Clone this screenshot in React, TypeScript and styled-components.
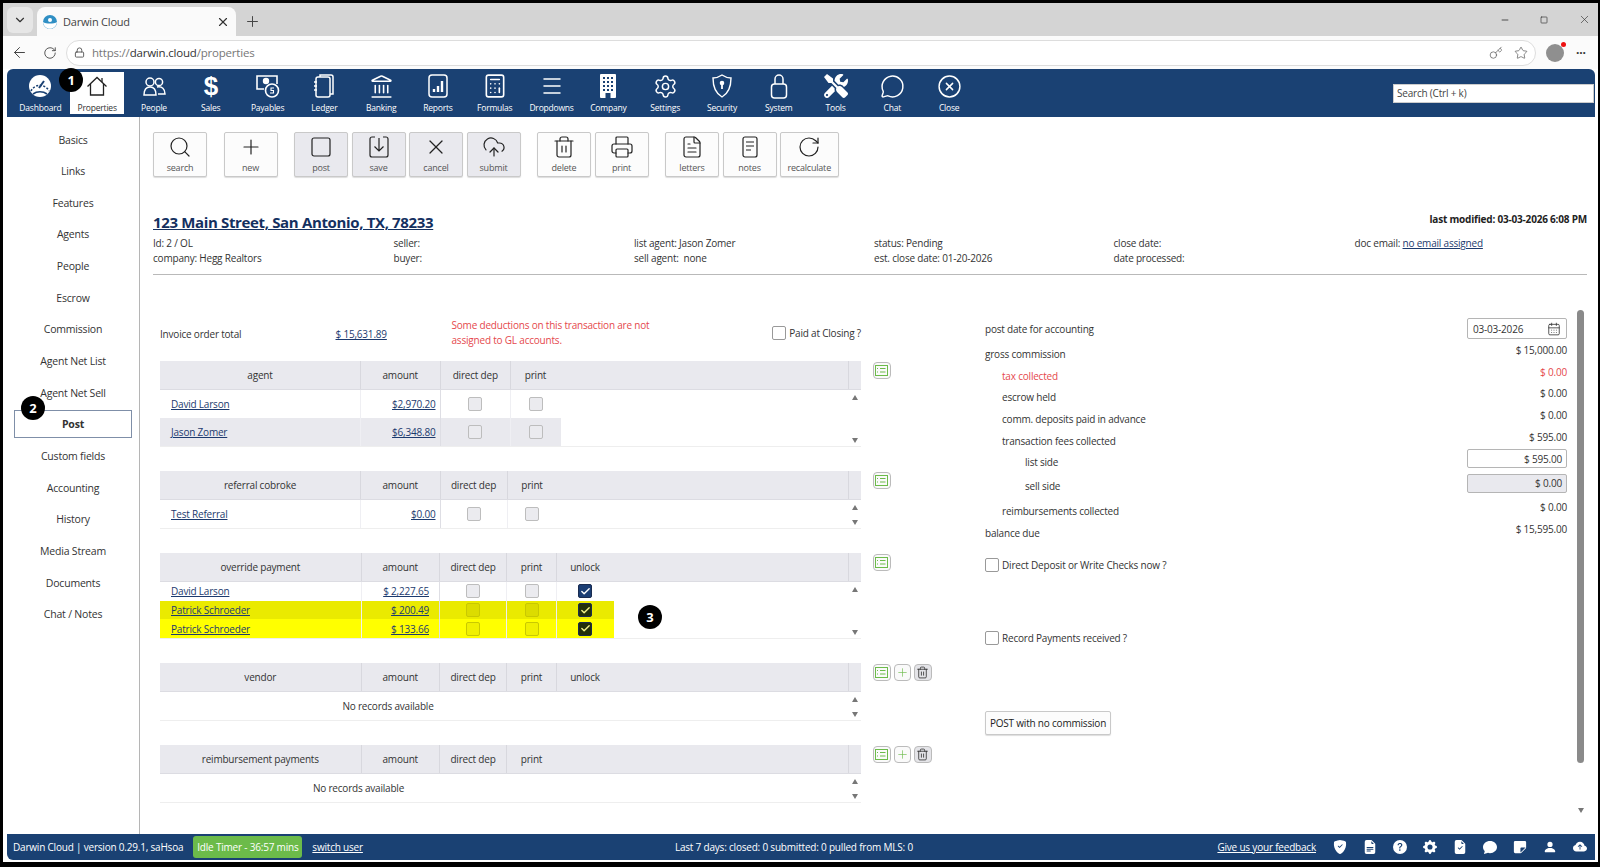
import React from 'react';
import styled, { createGlobalStyle } from 'styled-components';
import {
  ArrowLeft,
  Calculator,
  CalendarDays,
  Check,
  ChevronDown,
  CircleX,
  CloudUpload,
  FileText,
  Key,
  Landmark,
  Lock,
  Menu,
  MessageCircle,
  Minus,
  Plus,
  Printer,
  RotateCw,
  Search,
  Settings,
  Square,
  Star,
  Trash2,
  X,
} from 'lucide-react';
import { FaTools } from 'react-icons/fa';
import {
  BsChatFill,
  BsCloudArrowUpFill,
  BsFileEarmarkCheckFill,
  BsFileEarmarkTextFill,
  BsGearFill,
  BsPersonFill,
  BsQuestionCircleFill,
  BsShieldFillCheck,
  BsStickyFill,
} from 'react-icons/bs';

const NAVY = '#1a4173';
const HEAD = '#e9e9ee';

const GlobalStyle = createGlobalStyle`
  html, body {
    margin: 0;
    background: #000;
    font-family: 'Open Sans', 'Noto Sans', sans-serif;
    font-size: 10px;
    letter-spacing: -0.2px;
    color: #333;
  }
  * { box-sizing: border-box; }
`;

// Small hand drawn icons

const Dashboard = () => (
  <svg width="24" height="24" viewBox="0 0 24 24">
    <circle cx="12" cy="12" r="11" fill="#fff" />
    <path d="M3 17a10 10 0 0 1 18 0" fill="none" stroke={NAVY} strokeWidth="1.6" strokeDasharray="2 1.6" />
    <path d="M11 14l5-7" stroke={NAVY} strokeWidth="2" />
    <path d="M5 20c4-3 10-3 14 0" fill="none" stroke={NAVY} strokeWidth="1.6" />
  </svg>
);

const House = () => (
  <svg width="24" height="24" viewBox="0 0 24 24" fill="none" stroke="#222" strokeWidth="1.3">
    <path d="M2.5 12.5 12 3.5l9.5 9" />
    <path d="M5.5 10v11h13V10" />
    <path d="M17 4v4" />
  </svg>
);

const People = () => (
  <svg width="24" height="24" viewBox="0 0 24 24" fill="none" stroke="#fff" strokeWidth="1.5">
    <circle cx="8" cy="8" r="4" />
    <circle cx="17" cy="8" r="3.6" />
    <path d="M2 21c0-5 2-8 6-8s6 3 6 8z" />
    <path d="M15 13c5-1 8 2 8 7h-7" />
  </svg>
);

const Payables = () => (
  <svg width="26" height="26" viewBox="0 0 26 26" fill="none" stroke="#fff" strokeWidth="1.6">
    <path d="M9 16H2V3h20v8" />
    <circle cx="11" cy="8" r="2.4" fill="#fff" />
    <circle cx="17" cy="17.5" r="6.5" />
    <path d="M19 15h-3v2.5h2.5V20H15" strokeWidth="1.1" />
  </svg>
);

const Ledger = () => (
  <svg width="24" height="26" viewBox="0 0 24 26" fill="none" stroke="#fff" strokeWidth="1.5">
    <rect x="4" y="4" width="14" height="20" rx="2" />
    <path d="M8 4V2h11a2 2 0 0 1 2 2v17h-3" />
    <path d="M2 9h3M2 13h3M2 17h3" />
  </svg>
);

const Reports = () => (
  <svg width="22" height="26" viewBox="0 0 22 26" fill="none" stroke="#fff" strokeWidth="1.5">
    <rect x="2" y="2" width="18" height="22" rx="3" />
    <path d="M7 19v-3M11 19v-6M15 19V8" strokeWidth="2.4" />
  </svg>
);

const Building = () => (
  <svg width="20" height="26" viewBox="0 0 20 26">
    <rect x="2" y="1" width="16" height="24" rx="1" fill="#fff" />
    {[4, 8, 12, 16].map(y =>
      [5, 9, 13].map(x => <rect key={`${x}-${y}`} x={x} y={y} width="2" height="2" fill={NAVY} />)
    )}
    <rect x="7.5" y="20" width="5" height="5" fill={NAVY} />
  </svg>
);

const Shield = () => (
  <svg width="22" height="26" viewBox="0 0 22 26" fill="none" stroke="#fff" strokeWidth="1.4">
    <path d="M11 2c3 2 6 3 9 3 0 9-2 15-9 19C4 20 2 14 2 5c3 0 6-1 9-3z" />
    <circle cx="11" cy="10" r="1.6" fill="#fff" />
    <path d="M11 11v5" strokeWidth="1.8" />
  </svg>
);

const Padlock = () => (
  <svg width="20" height="28" viewBox="0 0 20 28" fill="none" stroke="#fff" strokeWidth="1.5">
    <rect x="2.5" y="12" width="15" height="14" rx="3" />
    <path d="M6 12V7a4 4 0 0 1 8 0v5" />
  </svg>
);

const SaveGlyph = () => (
  <svg width="24" height="24" viewBox="0 0 24 24" fill="none" stroke="#222" strokeWidth="1.2">
    <path d="M8 2H5a2 2 0 0 0-2 2v16a2 2 0 0 0 2 2h14a2 2 0 0 0 2-2V4a2 2 0 0 0-2-2h-3" />
    <path d="M12 3v13M7.5 11.5 12 16l4.500-4.500" />
  </svg>
);

const NotesGlyph = () => (
  <svg width="24" height="24" viewBox="0 0 24 24" fill="none" stroke="#222" strokeWidth="1.2">
    <rect x="5" y="2" width="14" height="20" rx="2" />
    <path d="M8 7h8M8 11h8M8 15h5" />
  </svg>
);

const CardList = ({ color }: { color: string }) => (
  <svg width="13" height="11" viewBox="0 0 13 11" fill="none" stroke={color} strokeWidth="1">
    <rect x=".5" y=".5" width="12" height="10" />
    <path d="M5 3.500h5.500M5 7h5.500" />
    <path d="M2.500 3v1M2.500 6.500v1" />
  </svg>
);

const Favicon = () => (
  <svg width="14" height="14" viewBox="0 0 14 14">
    <circle cx="7" cy="7" r="7" fill="#2f8fc4" />
    <path d="M0 7c3 2 11 2 14 0-1 9-13 9-14 0z" fill="#fff" />
    <circle cx="7" cy="5" r="2" fill="#fff" />
  </svg>
);

// Data

const NAV = [
  { label: 'Dashboard', icon: <Dashboard /> },
  { label: 'Properties', icon: <House />, active: true, badge: 1 },
  { label: 'People', icon: <People /> },
  { label: 'Sales', icon: <Dollar>$</Dollar> },
  { label: 'Payables', icon: <Payables /> },
  { label: 'Ledger', icon: <Ledger /> },
  { label: 'Banking', icon: <Landmark size={25} strokeWidth={1.5} /> },
  { label: 'Reports', icon: <Reports /> },
  { label: 'Formulas', icon: <Calculator size={26} strokeWidth={1.5} /> },
  { label: 'Dropdowns', icon: <Menu size={24} strokeWidth={1.5} /> },
  { label: 'Company', icon: <Building /> },
  { label: 'Settings', icon: <Settings size={25} strokeWidth={1.4} /> },
  { label: 'Security', icon: <Shield /> },
  { label: 'System', icon: <Padlock /> },
  { label: 'Tools', icon: <FaTools size={24} /> },
  { label: 'Chat', icon: <MessageCircle size={25} strokeWidth={1.4} /> },
  { label: 'Close', icon: <CircleX size={25} strokeWidth={1.4} /> },
];

const SIDE = [
  'Basics', 'Links', 'Features', 'Agents', 'People', 'Escrow', 'Commission', 'Agent Net List',
  'Agent Net Sell', 'Post', 'Custom fields', 'Accounting', 'History', 'Media Stream', 'Documents', 'Chat / Notes',
];

const ic = { size: 24, strokeWidth: 1.2, color: '#222' };

const TOOLS = [
  [
    { label: 'search', icon: <Search {...ic} /> },
  ],
  [
    { label: 'new', icon: <Plus {...ic} /> },
  ],
  [
    { label: 'post', icon: <Square {...ic} />, shaded: true },
    { label: 'save', icon: <SaveGlyph />, shaded: true },
    { label: 'cancel', icon: <X {...ic} />, shaded: true },
    { label: 'submit', icon: <CloudUpload {...ic} />, shaded: true },
  ],
  [
    { label: 'delete', icon: <Trash2 {...ic} /> },
    { label: 'print', icon: <Printer {...ic} /> },
  ],
  [
    { label: 'letters', icon: <FileText {...ic} /> },
    { label: 'notes', icon: <NotesGlyph /> },
    { label: 'recalculate', icon: <RotateCw {...ic} />, wide: true },
  ],
];

const STATUS_ICONS = [
  BsShieldFillCheck, BsFileEarmarkTextFill, BsQuestionCircleFill, BsGearFill, BsFileEarmarkCheckFill,
  BsChatFill, BsStickyFill, BsPersonFill, BsCloudArrowUpFill,
];

type Row = { name: string; amount: string; tone?: 'alt' | 'dim' | 'hi'; unlock?: boolean };

const FULL = [201.5, 78.5, 67, 50, 57];

const TableBlock = ({
  heads,
  cols,
  rows,
  rowH,
  amountPad = 4,
  empty,
  extras,
  badge,
}: {
  heads: string[];
  cols: number[];
  rows?: Row[];
  rowH: number;
  amountPad?: number;
  empty?: number;
  extras?: boolean;
  badge?: boolean;
}) => {
  const template = cols.map(c => `${c}px`).join(' ');
  return (
    <TableLine>
      <Table>
        <HeadRow>
          <HeadCells $cols={template}>
            {heads.map((h, i) => (
              <HeadCell key={h} $open={i === heads.length - 1 && heads.length === 4 && !!rows && cols[2] > 67}>
                {h}
              </HeadCell>
            ))}
          </HeadCells>
          <HeadScroll />
        </HeadRow>
        <BodyWrap>
          <Rows>
            {rows?.map((r, i) => (
              <BodyRow key={i} $cols={template} $h={rowH} $tone={r.tone}>
                <NameCell>
                  <Link>{r.name}</Link>
                </NameCell>
                <AmountCell $pad={amountPad}>
                  <Link>{r.amount}</Link>
                </AmountCell>
                <BoxCell $line>
                  <Box $hi={r.tone === 'dim' || r.tone === 'hi'} />
                </BoxCell>
                <BoxCell $line>
                  <Box $hi={r.tone === 'dim' || r.tone === 'hi'} />
                </BoxCell>
                {r.unlock && (
                  <BoxCell>
                    <Box $checked $hi={r.tone === 'dim' || r.tone === 'hi'}>
                      <Check size={11} strokeWidth={3} />
                    </Box>
                  </BoxCell>
                )}
              </BodyRow>
            ))}
            {empty && <EmptyCell style={{ width: empty }}>No records available</EmptyCell>}
            {badge && <FloatBadge>3</FloatBadge>}
          </Rows>
          <ScrollRail>
            <ArrowUp />
            <ArrowDown />
          </ScrollRail>
        </BodyWrap>
      </Table>
      <Actions>
        <MiniButton>
          <CardList color="#6cbb4a" />
        </MiniButton>
        {extras && (
          <>
            <MiniButton>
              <Plus size={13} strokeWidth={1.2} color="#6cbb4a" />
            </MiniButton>
            <MiniButton $shaded>
              <Trash2 size={13} strokeWidth={1.4} color="#222" />
            </MiniButton>
          </>
        )}
      </Actions>
    </TableLine>
  );
};

const App: React.FC = () => (
  <Window>
    <GlobalStyle />
    <TabStrip>
      <TabMenu>
        <ChevronDown size={14} color="#333" />
      </TabMenu>
      <Tab>
        <Favicon />
        <TabTitle>Darwin Cloud</TabTitle>
        <X size={14} color="#333" />
      </Tab>
      <NewTab>
        <Plus size={17} strokeWidth={1.4} color="#444" />
      </NewTab>
      <WindowControls>
        <Minus size={10} color="#333" />
        <Square size={8} color="#333" />
        <X size={13} strokeWidth={1.2} color="#333" />
      </WindowControls>
    </TabStrip>
    <AddressBar>
      <ArrowLeft size={17} strokeWidth={1.4} color="#444" />
      <RotateCw size={14} strokeWidth={1.5} color="#444" />
      <UrlPill>
        <Lock size={11} color="#555" />
        <Url>
          https://<b>darwin.cloud</b>/properties
        </Url>
        <PillIcons>
          <Key size={14} strokeWidth={1.2} color="#555" />
          <Star size={14} strokeWidth={1.2} color="#555" />
        </PillIcons>
      </UrlPill>
      <Avatar />
      <Dots>···</Dots>
    </AddressBar>
    <Frame>
      <Nav>
        {NAV.map(n => (
          <NavItem key={n.label} $active={n.active}>
            {n.badge && <NavBadge>{n.badge}</NavBadge>}
            <NavIcon>{n.icon}</NavIcon>
            <NavLabel>{n.label}</NavLabel>
          </NavItem>
        ))}
        <SearchInput>Search (Ctrl + k)</SearchInput>
      </Nav>
      <Main>
        <Sidebar>
          {SIDE.map(s => (
            <SideItem key={s} $active={s === 'Post'}>
              {s === 'Post' && <SideBadge>2</SideBadge>}
              {s}
            </SideItem>
          ))}
        </Sidebar>
        <Content>
          <Toolbar>
            {TOOLS.map((group, i) => (
              <ToolGroup key={i}>
                {group.map(t => (
                  <ToolButton key={t.label} $shaded={'shaded' in t} $wide={'wide' in t}>
                    {t.icon}
                    <ToolLabel>{t.label}</ToolLabel>
                  </ToolButton>
                ))}
              </ToolGroup>
            ))}
          </Toolbar>
          <TitleRow>
            <Title>123 Main Street, San Antonio, TX, 78233</Title>
            <Modified>last modified: 03-03-2026 6:08 PM</Modified>
          </TitleRow>
          <MetaGrid>
            <span>Id: 2 / OL</span>
            <span>seller:</span>
            <span>list agent: Jason Zomer</span>
            <span>status: Pending</span>
            <span>close date:</span>
            <span>
              doc email: <Link>no email assigned</Link>
            </span>
            <span>company: Hegg Realtors</span>
            <span>buyer:</span>
            <span>sell agent: &nbsp;none</span>
            <span>est. close date: 01-20-2026</span>
            <span>date processed:</span>
            <span />
          </MetaGrid>
          <PostArea>
            <LeftColumn>
              <InvoiceRow>
                <InvoiceLabel>Invoice order total</InvoiceLabel>
                <InvoiceValue>
                  <Link>$ 15,631.89</Link>
                </InvoiceValue>
                <Warning>
                  Some deductions on this transaction are not
                  <br />
                  assigned to GL accounts.
                </Warning>
                <PaidCheck>
                  <Box $plain />
                  Paid at Closing ?
                </PaidCheck>
              </InvoiceRow>
              <Stack>
                <TableBlock
                  heads={['agent', 'amount', 'direct dep', 'print']}
                  cols={[201, 79.5, 70.5, 50]}
                  rowH={28}
                  rows={[
                    { name: 'David Larson', amount: '$2,970.20' },
                    { name: 'Jason Zomer', amount: '$6,348.80', tone: 'alt' },
                  ]}
                />
                <TableBlock
                  heads={['referral cobroke', 'amount', 'direct dep', 'print']}
                  cols={[201, 79.5, 67, 50]}
                  rowH={28}
                  rows={[{ name: 'Test Referral', amount: '$0.00' }]}
                />
                <TableBlock
                  heads={['override payment', 'amount', 'direct dep', 'print', 'unlock']}
                  cols={FULL}
                  rowH={18.7}
                  amountPad={10}
                  badge
                  rows={[
                    { name: 'David Larson', amount: '$ 2,227.65', unlock: true },
                    { name: 'Patrick Schroeder', amount: '$ 200.49', tone: 'dim', unlock: true },
                    { name: 'Patrick Schroeder', amount: '$ 133.66', tone: 'hi', unlock: true },
                  ]}
                />
                <TableBlock
                  heads={['vendor', 'amount', 'direct dep', 'print', 'unlock']}
                  cols={FULL}
                  rowH={28}
                  empty={456}
                  extras
                />
                <TableBlock
                  heads={['reimbursement payments', 'amount', 'direct dep', 'print']}
                  cols={FULL.slice(0, 4)}
                  rowH={28}
                  empty={397}
                  extras
                />
              </Stack>
            </LeftColumn>
            <RightColumn>
              <SummaryRow $h={21}>
                <SummaryLabel>post date for accounting</SummaryLabel>
                <DateField>
                  03-03-2026
                  <CalendarDays size={14} strokeWidth={1.4} color="#333" />
                </DateField>
              </SummaryRow>
              <SummaryRow $top={4}>
                <SummaryLabel>gross commission</SummaryLabel>
                <Amount>$ 15,000.00</Amount>
              </SummaryRow>
              <SummaryRow $red>
                <SummaryLabel $indent={1}>tax collected</SummaryLabel>
                <Amount>$ 0.00</Amount>
              </SummaryRow>
              <SummaryRow>
                <SummaryLabel $indent={1}>escrow held</SummaryLabel>
                <Amount>$ 0.00</Amount>
              </SummaryRow>
              <SummaryRow>
                <SummaryLabel $indent={1}>comm. deposits paid in advance</SummaryLabel>
                <Amount>$ 0.00</Amount>
              </SummaryRow>
              <SummaryRow>
                <SummaryLabel $indent={1}>transaction fees collected</SummaryLabel>
                <Amount>$ 595.00</Amount>
              </SummaryRow>
              <SummaryRow $h={21}>
                <SummaryLabel $indent={2}>list side</SummaryLabel>
                <MoneyField>$ 595.00</MoneyField>
              </SummaryRow>
              <SummaryRow $h={28}>
                <SummaryLabel $indent={2}>sell side</SummaryLabel>
                <MoneyField $disabled>$ 0.00</MoneyField>
              </SummaryRow>
              <SummaryRow>
                <SummaryLabel $indent={1}>reimbursements collected</SummaryLabel>
                <Amount>$ 0.00</Amount>
              </SummaryRow>
              <SummaryRow>
                <SummaryLabel>balance due</SummaryLabel>
                <Amount>$ 15,595.00</Amount>
              </SummaryRow>
              <CheckLine $top={13}>
                <Box $plain />
                Direct Deposit or Write Checks now ?
              </CheckLine>
              <CheckLine $top={57}>
                <Box $plain />
                Record Payments received ?
              </CheckLine>
              <PostButton>POST with no commission</PostButton>
            </RightColumn>
            <PageScroll>
              <Thumb />
              <ArrowDown />
            </PageScroll>
          </PostArea>
        </Content>
      </Main>
      <StatusBar>
        <span>Darwin Cloud | version 0.29.1, saHsoa</span>
        <IdleTimer>Idle Timer - 36:57 mins</IdleTimer>
        <StatusLink>switch user</StatusLink>
        <StatusCenter>Last 7 days: closed: 0 submitted: 0 pulled from MLS: 0</StatusCenter>
        <FeedbackLink>Give us your feedback</FeedbackLink>
        <StatusIcons>
          {STATUS_ICONS.map((Icon, i) => (
            <StatusIcon key={i}>
              <Icon size={14} />
            </StatusIcon>
          ))}
        </StatusIcons>
      </StatusBar>
    </Frame>
  </Window>
);

export default App;

// Elements

function Dollar({ children }: { children: React.ReactNode }) {
  return <DollarText>{children}</DollarText>;
}

const DollarText = styled.span`
  font-size: 26px;
  font-weight: 700;
  line-height: 26px;
  font-family: 'Liberation Sans', sans-serif;
`;

const Window = styled.div`
  margin: 3px 2px 0 3px;
  height: 859px;
  background: #fff;
  display: flex;
  flex-direction: column;
  overflow: hidden;
`;

const TabStrip = styled.div`
  height: 33px;
  flex: none;
  background: #d4d4d4;
  display: flex;
  align-items: flex-end;
  padding-left: 4px;
`;

const TabMenu = styled.div`
  width: 26px;
  height: 26px;
  margin-bottom: 3px;
  border-radius: 6px;
  background: #e6e6e6;
  display: flex;
  align-items: center;
  justify-content: center;
`;

const Tab = styled.div`
  width: 199px;
  height: 29px;
  margin-left: 4px;
  padding: 0 6px 0 6px;
  background: #fafafa;
  border-radius: 8px 8px 0 0;
  display: flex;
  align-items: center;
  font-size: 11px;
`;

const TabTitle = styled.span`
  flex: 1;
  margin-left: 6px;
  color: #444;
`;

const NewTab = styled.div`
  margin: 0 0 6px 8px;
  display: flex;
`;

const WindowControls = styled.div`
  margin-left: auto;
  height: 33px;
  align-self: flex-start;
  display: flex;
  align-items: center;
  gap: 30px;
  padding-right: 7px;
`;

const AddressBar = styled.div`
  height: 33px;
  flex: none;
  background: #fbfbfb;
  display: flex;
  align-items: center;
  padding-left: 8px;
  gap: 15px;
`;

const UrlPill = styled.div`
  width: 1470px;
  height: 26px;
  border: 1px solid #ddd;
  border-radius: 13px;
  background: #fff;
  display: flex;
  align-items: center;
  padding: 0 7px;
  margin-left: -6px;
`;

const Url = styled.span`
  margin-left: 7px;
  font-size: 11.5px;
  color: #777;
  b {
    font-weight: 400;
    color: #333;
  }
`;

const PillIcons = styled.span`
  margin-left: auto;
  display: flex;
  gap: 11px;
`;

const Avatar = styled.span`
  position: relative;
  width: 18px;
  height: 18px;
  margin-left: -5px;
  border-radius: 50%;
  background: #8f8f8f;
  &::after {
    content: '';
    position: absolute;
    top: -2px;
    right: -2px;
    width: 5px;
    height: 5px;
    border-radius: 50%;
    background: #e11;
  }
`;

const Dots = styled.span`
  margin-left: -3px;
  font-size: 12px;
  font-weight: 700;
`;

const Frame = styled.div`
  flex: 1;
  min-height: 0;
  display: flex;
  flex-direction: column;
  padding: 0 3px 2px 4px;
`;

const Nav = styled.div`
  height: 48px;
  flex: none;
  background: ${NAVY};
  border-radius: 6px 6px 0 0;
  display: flex;
  align-items: center;
  padding: 0 1px 0 5px;
  color: #fff;
`;

const NavItem = styled.div<{ $active?: boolean }>`
  position: relative;
  width: 56.8px;
  height: 42px;
  flex: none;
  display: flex;
  flex-direction: column;
  align-items: center;
  justify-content: flex-start;
  background: ${({ $active }) => ($active ? '#fff' : 'transparent')};
  color: ${({ $active }) => ($active ? '#333' : '#fff')};
  ${({ $active }) => ($active ? 'width: 54px; margin: 0 1.4px;' : '')}
`;

const NavIcon = styled.div`
  height: 28px;
  display: flex;
  align-items: center;
  justify-content: center;
`;

const NavLabel = styled.span`
  margin-top: 2px;
  font-size: 8.5px;
  line-height: 12px;
  white-space: nowrap;
`;

const Badge = styled.span`
  position: absolute;
  width: 24px;
  height: 24px;
  border-radius: 50%;
  background: #000;
  color: #fff;
  font-size: 13px;
  font-weight: 700;
  display: flex;
  align-items: center;
  justify-content: center;
  letter-spacing: 0;
`;

const NavBadge = styled(Badge)`
  left: -11px;
  top: -4px;
`;

const SearchInput = styled.div`
  margin-left: auto;
  width: 201px;
  height: 19px;
  background: #fff;
  border: 1px solid #ccc;
  padding: 0 3px;
  font-size: 10px;
  line-height: 17px;
  color: #444;
`;

const Main = styled.div`
  flex: 1;
  min-height: 0;
  display: flex;
`;

const Sidebar = styled.div`
  width: 133px;
  flex: none;
  border-right: 1px solid #b5b5b5;
  padding: 8.500px 7px 0;
  display: flex;
  flex-direction: column;
  gap: 3.660px;
`;

const SideItem = styled.div<{ $active?: boolean }>`
  position: relative;
  height: 28px;
  display: flex;
  align-items: center;
  justify-content: center;
  font-size: 10.5px;
  color: #333;
  border: 1px solid ${({ $active }) => ($active ? '#7f8fa8' : 'transparent')};
  font-weight: ${({ $active }) => ($active ? 700 : 400)};
`;

const SideBadge = styled(Badge)`
  left: 6px;
  top: -15px;
`;

const Content = styled.div`
  flex: 1;
  min-width: 0;
  padding: 15px 8px 0 13px;
`;

const Toolbar = styled.div`
  display: flex;
  gap: 16.500px;
`;

const ToolGroup = styled.div`
  display: flex;
  gap: 3.500px;
`;

const ToolButton = styled.div<{ $shaded?: boolean; $wide?: boolean }>`
  width: ${({ $wide }) => ($wide ? 58.5 : 54)}px;
  height: 45px;
  padding-top: 2px;
  background: ${({ $shaded }) => ($shaded ? HEAD : '#fcfcfc')};
  border: 1px solid #c9c9c9;
  border-radius: 2px;
  box-shadow: 0 1px 1px #ddd;
  display: flex;
  flex-direction: column;
  align-items: center;
`;

const ToolLabel = styled.span`
  margin-top: 3px;
  font-size: 9px;
  line-height: 12px;
  color: #555;
`;

const TitleRow = styled.div`
  margin-top: 35px;
  display: flex;
  justify-content: space-between;
  align-items: flex-start;
  height: 21px;
`;

const Title = styled.div`
  font-size: 15px;
  line-height: 20px;
  font-weight: 700;
  color: #14305f;
  text-decoration: underline;
  letter-spacing: -0.35px;
`;

const Modified = styled.div`
  font-size: 10px;
  line-height: 14px;
  font-weight: 700;
  color: #222;
`;

const MetaGrid = styled.div`
  margin-top: 2px;
  height: 34px;
  padding-bottom: 0;
  display: grid;
  grid-template-columns: 240.500px 240.500px 240px 239.500px 241px 1fr;
  grid-auto-rows: 15px;
  align-items: center;
  border-bottom: 1px solid #b9b9b9;
  span {
    white-space: nowrap;
  }
  height: 40px;
`;

const PostArea = styled.div`
  display: flex;
  height: 557px;
`;

const LeftColumn = styled.div`
  width: 832px;
  flex: none;
  padding-left: 7px;
`;

const InvoiceRow = styled.div`
  margin-top: 43px;
  height: 43px;
  display: flex;
  align-items: flex-start;
  width: 701px;
  position: relative;
`;

const InvoiceLabel = styled.span`
  width: 175.500px;
  margin-top: 9px;
`;

const InvoiceValue = styled.span`
  width: 116px;
  margin-top: 9px;
`;

const Warning = styled.span`
  line-height: 15px;
  color: #e5484d;
`;

const PaidCheck = styled.span`
  margin-left: auto;
  margin-top: 8px;
  display: flex;
  align-items: center;
  gap: 3px;
`;

const Link = styled.span`
  color: #1c3a6e;
  text-decoration: underline;
`;

const Stack = styled.div`
  display: flex;
  flex-direction: column;
  gap: 24px;
`;

const TableLine = styled.div`
  display: flex;
  align-items: flex-start;
  gap: 12px;
`;

const Table = styled.div`
  width: 701px;
  flex: none;
  border-bottom: 1px solid #eee;
`;

const HeadRow = styled.div`
  display: flex;
  height: 29px;
  background: ${HEAD};
  border-bottom: 1px solid #dcdce2;
`;

const HeadCells = styled.div<{ $cols: string }>`
  flex: 1;
  display: grid;
  grid-template-columns: ${({ $cols }) => $cols};
`;

const HeadCell = styled.div<{ $open?: boolean }>`
  display: flex;
  align-items: center;
  justify-content: center;
  border-right: 1px solid ${({ $open }) => ($open ? 'transparent' : '#d8d8de')};
  font-size: 10px;
  &:last-child {
    border-right-color: transparent;
  }
`;

const HeadScroll = styled.div`
  width: 13px;
  flex: none;
  border-left: 1px solid #d8d8de;
`;

const BodyWrap = styled.div`
  display: flex;
  min-height: 28px;
`;

const Rows = styled.div`
  position: relative;
  flex: 1;
  min-width: 0;
`;

const FloatBadge = styled(Badge)`
  left: 478px;
  top: 23px;
`;

const rowTones = { alt: HEAD, dim: '#eaea00', hi: '#ffff00' };

const BodyRow = styled.div<{ $cols: string; $h: number; $tone?: Row['tone'] }>`
  width: fit-content;
  height: ${({ $h }) => $h}px;
  display: grid;
  grid-template-columns: ${({ $cols }) => $cols};
  background: ${({ $tone }) => ($tone ? rowTones[$tone] : 'transparent')};
`;

const NameCell = styled.div`
  padding-left: 11px;
  display: flex;
  align-items: center;
  border-right: 1px solid #efeff3;
`;

const AmountCell = styled.div<{ $pad: number }>`
  padding-right: ${({ $pad }) => $pad}px;
  display: flex;
  align-items: center;
  justify-content: flex-end;
  border-right: 1px solid #dedee4;
`;

const BoxCell = styled.div<{ $line?: boolean }>`
  display: flex;
  align-items: center;
  justify-content: center;
  border-right: 1px solid ${({ $line }) => ($line ? '#efeff3' : 'transparent')};
  &:nth-child(4):last-child {
    border-right-color: transparent;
  }
`;

const Box = styled.span<{ $hi?: boolean; $checked?: boolean; $plain?: boolean }>`
  width: 14px;
  height: 14px;
  flex: none;
  border-radius: 2px;
  display: inline-flex;
  align-items: center;
  justify-content: center;
  color: #fff;
  border: 1px solid
    ${({ $hi, $checked, $plain }) =>
      $checked ? '#1a2c50' : $hi ? '#c9c900' : $plain ? '#999' : '#bdbdbd'};
  background: ${({ $hi, $checked, $plain }) =>
    $checked ? ($hi ? '#22300a' : '#1a3d73') : $hi ? 'rgba(0,0,0,.06)' : $plain ? '#fff' : '#ebebef'};
  svg {
    color: ${({ $hi }) => ($hi ? '#f4f48a' : '#fff')};
  }
`;

const EmptyCell = styled.div`
  height: 28px;
  display: flex;
  align-items: center;
  justify-content: center;
`;

const ScrollRail = styled.div`
  width: 13px;
  flex: none;
  padding: 5px 0 3px;
  display: flex;
  flex-direction: column;
  justify-content: space-between;
  align-items: center;
`;

const ArrowUp = styled.span`
  width: 0;
  height: 0;
  border-left: 3.500px solid transparent;
  border-right: 3.500px solid transparent;
  border-bottom: 5px solid #777;
`;

const ArrowDown = styled.span`
  width: 0;
  height: 0;
  border-left: 3.500px solid transparent;
  border-right: 3.500px solid transparent;
  border-top: 5px solid #777;
`;

const Actions = styled.div`
  display: flex;
  gap: 3px;
  padding-top: 1px;
`;

const MiniButton = styled.span<{ $shaded?: boolean }>`
  width: 17.500px;
  height: 17px;
  border: 1px solid #bbb;
  border-radius: 4px;
  background: ${({ $shaded }) => ($shaded ? '#e4e4e8' : '#fafafa')};
  display: flex;
  align-items: center;
  justify-content: center;
`;

const RightColumn = styled.div`
  width: 582px;
  flex: none;
  padding-top: 43px;
`;

const SummaryRow = styled.div<{ $h?: number; $top?: number; $red?: boolean }>`
  height: ${({ $h }) => $h ?? 21.700}px;
  margin-top: ${({ $top }) => $top ?? 0}px;
  display: flex;
  align-items: center;
  justify-content: space-between;
  color: ${({ $red }) => ($red ? '#e5484d' : '#333')};
`;

const SummaryLabel = styled.span<{ $indent?: number }>`
  padding-left: ${({ $indent }) => [0, 17, 40][$indent ?? 0]}px;
`;

const Amount = styled.span`
  padding-bottom: 8px;
`;

const Field = styled.div`
  width: 100px;
  border: 1px solid #b5b5b5;
  border-radius: 2px;
  display: flex;
  align-items: center;
`;

const DateField = styled(Field)`
  height: 21px;
  padding: 0 5px;
  justify-content: space-between;
`;

const MoneyField = styled(Field)<{ $disabled?: boolean }>`
  height: 19px;
  margin-bottom: 6px;
  padding: 0 4px;
  justify-content: flex-end;
  background: ${({ $disabled }) => ($disabled ? HEAD : '#fff')};
`;

const CheckLine = styled.div<{ $top: number }>`
  margin-top: ${({ $top }) => $top}px;
  height: 16px;
  display: flex;
  align-items: center;
  gap: 3px;
`;

const PostButton = styled.div`
  margin-top: 65px;
  width: 126px;
  height: 24px;
  border: 1px solid #c9c9c9;
  border-radius: 2px;
  box-shadow: 0 1px 1px #ddd;
  display: flex;
  align-items: center;
  justify-content: center;
  background: #fcfcfc;
  color: #222;
`;

const PageScroll = styled.div`
  width: 7px;
  margin-left: 10px;
  padding-top: 35px;
  display: flex;
  flex-direction: column;
  align-items: center;
  gap: 45px;
`;

const Thumb = styled.div`
  width: 7px;
  height: 453px;
  border-radius: 4px;
  background: #8a8a8a;
`;

const StatusBar = styled.div`
  height: 26px;
  flex: none;
  background: ${NAVY};
  border-radius: 0 0 0 6px;
  color: #fff;
  padding-left: 6px;
  display: flex;
  align-items: center;
  font-size: 10px;
  position: relative;
`;

const IdleTimer = styled.span`
  margin-left: 10px;
  height: 22px;
  width: 109px;
  border-radius: 3px;
  background: #6cbb4a;
  display: flex;
  align-items: center;
  justify-content: center;
`;

const StatusLink = styled.span`
  margin-left: 10px;
  text-decoration: underline;
`;

const StatusCenter = styled.span`
  margin-left: 312px;
`;

const FeedbackLink = styled.span`
  margin-left: auto;
  text-decoration: underline;
`;

const StatusIcons = styled.div`
  display: flex;
  margin: 0 0 0 9px;
  padding-right: 0;
`;

const StatusIcon = styled.span`
  width: 30px;
  display: flex;
  justify-content: center;
`;
